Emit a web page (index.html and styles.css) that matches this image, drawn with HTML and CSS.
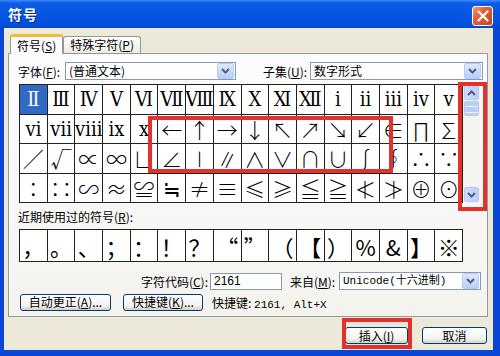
FILE: index.html
```html
<!DOCTYPE html>
<html lang="zh-CN">
  <head>
    <meta charset="UTF-8" />
    <title>符号</title>
    <link rel="stylesheet" href="styles.css">
  </head>
  <body>
    <div class="window">
      <div class="titlebar">
        <span class="title">符号</span>
        <button class="close-btn" aria-label="关闭">
          <svg width="12" height="12" viewBox="0 0 12 12">
            <path d="M1.5 1.5 L10.5 10.5 M10.5 1.5 L1.5 10.5" stroke="#fff" stroke-width="2.2" stroke-linecap="round" />
          </svg>
        </button>
      </div>

      <div class="client">
        <div class="tabs">
          <div class="tab active">符号(<u>S</u>)</div>
          <div class="tab">特殊字符(<u>P</u>)</div>
        </div>

        <div class="panel">
          <div class="font-row">
            <label class="lbl lbl-font">字体(<u>F</u>):</label>
            <div class="combo combo-font">
              <span class="combo-text">(普通文本)</span>
              <span class="drop-btn">
                <svg width="9" height="6" viewBox="0 0 9 6"><path d="M1 1 L4.5 4.5 L8 1" fill="none" stroke="#4d6185" stroke-width="2" /></svg>
              </span>
            </div>
            <label class="lbl lbl-subset">子集(<u>U</u>):</label>
            <div class="combo combo-subset">
              <span class="combo-text">数字形式</span>
              <span class="drop-btn">
                <svg width="9" height="6" viewBox="0 0 9 6"><path d="M1 1 L4.5 4.5 L8 1" fill="none" stroke="#4d6185" stroke-width="2" /></svg>
              </span>
            </div>
          </div>

          <div class="grid-area">
            <div class="symbol-grid">
              <span class="cell selected">Ⅱ</span>
              <span class="cell">Ⅲ</span>
              <span class="cell">Ⅳ</span>
              <span class="cell">Ⅴ</span>
              <span class="cell">Ⅵ</span>
              <span class="cell">Ⅶ</span>
              <span class="cell">Ⅷ</span>
              <span class="cell">Ⅸ</span>
              <span class="cell">Ⅹ</span>
              <span class="cell">Ⅺ</span>
              <span class="cell">Ⅻ</span>
              <span class="cell">ⅰ</span>
              <span class="cell">ⅱ</span>
              <span class="cell">ⅲ</span>
              <span class="cell">ⅳ</span>
              <span class="cell">ⅴ</span>

              <span class="cell">ⅵ</span>
              <span class="cell">ⅶ</span>
              <span class="cell">ⅷ</span>
              <span class="cell">ⅸ</span>
              <span class="cell">ⅹ</span>
              <span class="cell">←</span>
              <span class="cell">↑</span>
              <span class="cell">→</span>
              <span class="cell">↓</span>
              <span class="cell">↖</span>
              <span class="cell">↗</span>
              <span class="cell">↘</span>
              <span class="cell">↙</span>
              <span class="cell">∈</span>
              <span class="cell">∏</span>
              <span class="cell">∑</span>

              <span class="cell">∕</span>
              <span class="cell">√</span>
              <span class="cell">∝</span>
              <span class="cell">∞</span>
              <span class="cell">∟</span>
              <span class="cell">∠</span>
              <span class="cell">∣</span>
              <span class="cell">∥</span>
              <span class="cell">∧</span>
              <span class="cell">∨</span>
              <span class="cell">∩</span>
              <span class="cell">∪</span>
              <span class="cell">∫</span>
              <span class="cell">∮</span>
              <span class="cell">∴</span>
              <span class="cell">∵</span>

              <span class="cell">∶</span>
              <span class="cell">∷</span>
              <span class="cell">∽</span>
              <span class="cell">≈</span>
              <span class="cell">≌</span>
              <span class="cell">≒</span>
              <span class="cell">≠</span>
              <span class="cell">≡</span>
              <span class="cell">≤</span>
              <span class="cell">≥</span>
              <span class="cell">≦</span>
              <span class="cell">≧</span>
              <span class="cell">≮</span>
              <span class="cell">≯</span>
              <span class="cell">⊕</span>
              <span class="cell">⊙</span>
            </div>

            <div class="scrollbar">
              <span class="sb-btn">
                <svg width="9" height="6" viewBox="0 0 9 6"><path d="M1 5 L4.5 1.5 L8 5" fill="none" stroke="#4d6185" stroke-width="2" /></svg>
              </span>
              <span class="sb-thumb"></span>
              <span class="sb-track"></span>
              <span class="sb-btn">
                <svg width="9" height="6" viewBox="0 0 9 6"><path d="M1 1 L4.5 4.5 L8 1" fill="none" stroke="#4d6185" stroke-width="2" /></svg>
              </span>
            </div>
          </div>

          <div class="recent-label">近期使用过的符号(<u>R</u>):</div>
          <div class="recent-grid">
            <span class="rcell">，</span>
            <span class="rcell">。</span>
            <span class="rcell">、</span>
            <span class="rcell">；</span>
            <span class="rcell">：</span>
            <span class="rcell">！</span>
            <span class="rcell">？</span>
            <span class="rcell">“</span>
            <span class="rcell">”</span>
            <span class="rcell">（</span>
            <span class="rcell">【</span>
            <span class="rcell">）</span>
            <span class="rcell">%</span>
            <span class="rcell">&amp;</span>
            <span class="rcell">】</span>
            <span class="rcell">※</span>
          </div>

          <div class="code-row">
            <label class="lbl">字符代码(<u>C</u>):</label>
            <div class="text-input">2161</div>
            <label class="lbl lbl-from">来自(<u>M</u>):</label>
            <div class="combo combo-from">
              <span class="combo-text mono">Unicode(十六进制)</span>
              <span class="drop-btn">
                <svg width="9" height="6" viewBox="0 0 9 6"><path d="M1 1 L4.5 4.5 L8 1" fill="none" stroke="#4d6185" stroke-width="2" /></svg>
              </span>
            </div>
          </div>

          <div class="action-row">
            <button class="xp-btn btn-auto">自动更正(<u>A</u>)...</button>
            <button class="xp-btn btn-key">快捷键(<u>K</u>)...</button>
            <span class="shortcut">快捷键: <span class="mono">2161, Alt+X</span></span>
          </div>
        </div>

        <div class="footer">
          <button class="xp-btn btn-insert">插入(<u>I</u>)</button>
          <button class="xp-btn btn-cancel">取消</button>
        </div>
      </div>

      <!-- красные рамки-пометки поверх окна -->
      <div class="mark mark-arrows"></div>
      <div class="mark mark-scroll"></div>
      <div class="mark mark-insert"></div>
    </div>
  </body>
</html>
```

FILE: styles.css
```css
body {
  margin: 0;
  font-family: "Noto Sans CJK SC", "DejaVu Sans", sans-serif;
  font-size: 12px;
  color: #000;
}

.window {
  position: relative;
  width: 500px;
  height: 356px;
  background-color: #0a46d6;
  display: flex;
  flex-direction: column;
  overflow: hidden;
}

.titlebar {
  height: 28px;
  flex-shrink: 0;
  display: flex;
  align-items: center;
  justify-content: space-between;
  padding: 0 7px 0 8px;
  background: linear-gradient(#3d8cf5 0, #0d5ce8 3px, #0655e4 14px, #0250dc 24px, #0446cc 28px);
}

.title {
  color: white;
  font-weight: bold;
  font-size: 14px;
  letter-spacing: 1px;
  text-shadow: 1px 1px 0 #0a2a8a;
}

.close-btn {
  width: 21px;
  height: 20px;
  padding: 0;
  margin-top: 4px;
  border: 1px solid #fff;
  border-radius: 3px;
  background: linear-gradient(135deg, #f0a080 0, #e2643c 35%, #c8401c 100%);
  display: flex;
  align-items: center;
  justify-content: center;
}

.client {
  flex: 1;
  background-color: #ece9d8;
  margin: 0 7px 6px 4px;
  padding: 5px 5px 0 4px;
  display: flex;
  flex-direction: column;
}

u {
  text-decoration: underline;
  text-underline-offset: 1px;
}

/* вкладки */

.tabs {
  display: flex;
  align-items: flex-end;
  height: 20px;
  padding-left: 2px;
}

.tab {
  height: 16px;
  padding: 0 6px;
  line-height: 16px;
  border: 1px solid #919b9c;
  border-bottom: none;
  border-radius: 3px 3px 0 0;
  background: linear-gradient(#ffffff, #ecebe6);
}

.tab.active {
  height: 17px;
  line-height: 18px;
  border-top: 3px solid #f7b83a;
  background: #fcfcfe;
  position: relative;
  top: 1px;
  z-index: 1;
}

/* панель */

.panel {
  border: 1px solid #919b9c;
  background: linear-gradient(#fcfcfe, #f4f3ee);
  padding: 8px 4px 6px 9px;
}

.lbl {
  white-space: nowrap;
}

.font-row {
  display: flex;
  align-items: center;
  height: 18px;
}

.lbl-font {
  width: 47px;
}

.lbl-subset {
  width: 47px;
  margin-left: 27px;
}

.combo {
  height: 18px;
  box-sizing: border-box;
  border: 1px solid #7f9db9;
  background: white;
  display: flex;
  align-items: center;
  justify-content: space-between;
  padding: 0 1px 0 3px;
}

.combo-font {
  width: 171px;
}

.combo-subset {
  width: 173px;
}

.combo-text {
  line-height: 16px;
}

.drop-btn {
  width: 15px;
  height: 14px;
  border: 1px solid #b9cbf3;
  border-radius: 2px;
  background: linear-gradient(#dfe8fd, #b8cdf8);
  display: flex;
  align-items: center;
  justify-content: center;
}

/* сетка символов */

.grid-area {
  display: flex;
  margin-top: 4px;
  margin-left: 1px;
}

.symbol-grid {
  width: 444px;
  height: 119px;
  box-sizing: border-box;
  border: 1px solid #222;
  background-color: #222;
  display: grid;
  grid-template-columns: repeat(16, 1fr);
  grid-template-rows: repeat(4, 1fr);
  gap: 1px;
}

.cell {
  background: white;
  display: flex;
  align-items: center;
  justify-content: center;
  font-family: "DejaVu Serif", "Noto Sans CJK SC", serif;
  font-stretch: condensed;
  font-size: 20px;
  overflow: hidden;
  white-space: nowrap;
}

/* стрелки и математика — полноширинные глифы */
.cell:nth-child(n+22) {
  font-family: "Noto Sans CJK SC", sans-serif;
  font-size: 21px;
  font-weight: 300;
}

.cell.selected {
  background: #316ac5;
  color: white;
}

.scrollbar {
  width: 17px;
  height: 119px;
  background: #f3f3ef;
  display: flex;
  flex-direction: column;
  align-items: center;
}

.sb-btn,
.sb-thumb {
  width: 15px;
  height: 15px;
  box-sizing: border-box;
  border: 1px solid #b6c9f7;
  border-radius: 2px;
  background: linear-gradient(90deg, #cfdcfc, #bccff9);
  display: flex;
  align-items: center;
  justify-content: center;
  margin-top: 1px;
}

.sb-thumb {
  background: repeating-linear-gradient(#bccff9 0, #bccff9 4px, #eef2fd 4px, #eef2fd 5px, #bccff9 5px, #bccff9 6px);
}

.sb-track {
  flex: 1;
}

.sb-btn:last-child {
  margin-bottom: 1px;
}

/* недавние символы */

.recent-label {
  margin-top: 7px;
  line-height: 14px;
  height: 14px;
}

.recent-grid {
  margin-top: 5px;
  margin-left: 1px;
  width: 444px;
  height: 33px;
  box-sizing: border-box;
  border: 1px solid #222;
  background-color: #222;
  display: grid;
  grid-template-columns: repeat(16, 1fr);
  gap: 1px;
}

.rcell {
  background: white;
  display: flex;
  align-items: center;
  justify-content: center;
  font-size: 22px;
  font-family: "Noto Sans CJK SC", sans-serif;
  overflow: hidden;
}

/* код символа */

.code-row {
  margin-top: 10px;
  height: 18px;
  display: flex;
  align-items: center;
  justify-content: flex-end;
  padding-right: 2px;
}

.text-input {
  width: 72px;
  height: 17px;
  box-sizing: border-box;
  border: 1px solid #7f9db9;
  background: white;
  margin-left: 2px;
  padding-left: 3px;
  line-height: 15px;
  font-family: "Liberation Sans", sans-serif;
}

.lbl-from {
  margin-left: 8px;
  width: 49px;
}

.combo-from {
  width: 142px;
}

.mono {
  font-family: "Liberation Mono", "Noto Sans CJK SC", monospace;
  font-size: 11px;
}

/* кнопки */

.action-row {
  margin-top: 4px;
  height: 16px;
  display: flex;
  align-items: center;
}

.xp-btn {
  height: 17px;
  padding: 0;
  border: 1px solid #003c74;
  border-radius: 3px;
  background: linear-gradient(#ffffff, #f4f3ee 70%, #d6d0c5);
  font-family: "Noto Sans CJK SC", sans-serif;
  font-size: 12px;
  line-height: 14px;
  color: #000;
}

.btn-auto {
  width: 91px;
  margin-left: 2px;
}

.btn-key {
  width: 80px;
  margin-left: 12px;
}

.shortcut {
  margin-left: 9px;
}

.footer {
  display: flex;
  justify-content: flex-end;
  margin-top: 10px;
  padding-right: 1px;
  gap: 14px;
}

.btn-insert {
  width: 63px;
}

.btn-cancel {
  width: 65px;
}

/* пометки */

.mark {
  position: absolute;
  border: 4px solid #e3312b;
  box-sizing: border-box;
}

.mark-arrows {
  left: 148px;
  top: 116px;
  width: 245px;
  height: 57px;
}

.mark-scroll {
  left: 458px;
  top: 82px;
  width: 29px;
  height: 129px;
}

.mark-insert {
  left: 342px;
  top: 318px;
  width: 70px;
  height: 31px;
}
```
